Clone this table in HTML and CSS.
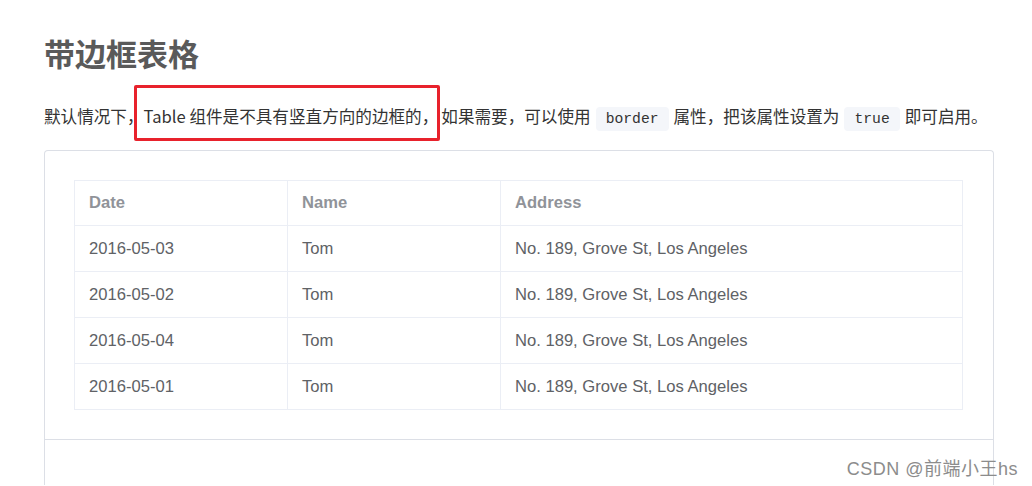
FILE: index.html
```html
<!DOCTYPE html>
<html lang="zh-CN">
<head>
<meta charset="utf-8">
<title>带边框表格</title>
<link rel="stylesheet" href="styles.css">
</head>
<body>
<main class="page">
  <h2 class="title">带边框表格</h2>
  <p class="desc">默认情况下，<span class="mark">Table 组件是不具有竖直方向的边框的，</span>如果需要，可以使用<code>border</code>属性，把该属性设置为<code>true</code>即可启用。</p>
  <section class="demo">
    <div class="demo-body">
      <table class="tbl">
        <colgroup><col class="c1"><col class="c2"><col class="c3"></colgroup>
        <thead>
          <tr><th>Date</th><th>Name</th><th>Address</th></tr>
        </thead>
        <tbody>
          <tr><td>2016-05-03</td><td>Tom</td><td>No. 189, Grove St, Los Angeles</td></tr>
          <tr><td>2016-05-02</td><td>Tom</td><td>No. 189, Grove St, Los Angeles</td></tr>
          <tr><td>2016-05-04</td><td>Tom</td><td>No. 189, Grove St, Los Angeles</td></tr>
          <tr><td>2016-05-01</td><td>Tom</td><td>No. 189, Grove St, Los Angeles</td></tr>
        </tbody>
      </table>
    </div>
    <div class="demo-foot"></div>
  </section>
</main>
<div class="watermark">CSDN @前端小王hs</div>
</body>
</html>
```
FILE: styles.css
```css
html, body {
  margin: 0;
  padding: 0;
  background: #ffffff;
  overflow: hidden;
}
body {
  font-family: "Noto Sans CJK SC", "Liberation Sans", sans-serif;
  height: 486px;
}
.page {
  padding: 29px 0 0 44px;
  width: 950px;
}
.title {
  margin: 0;
  font-size: 31px;
  line-height: 48px;
  font-weight: 700;
  color: #5a5a5a;
}
.desc {
  margin: 27px 0 0 0;
  font-size: 16.6px;
  line-height: 24px;
  color: #333333;
  white-space: nowrap;
}
.mark {
  position: relative;
  margin-right: 3px;
}
.mark::after {
  content: "";
  position: absolute;
  left: -10px;
  right: -2px;
  top: -19px;
  bottom: -13px;
  border: 3px solid #e8222c;
  border-radius: 2px;
}
.desc code {
  font-family: "Liberation Mono", "DejaVu Sans Mono", monospace;
  font-size: 14.7px;
  background: #f4f6fa;
  color: #333;
  border-radius: 4px;
  padding: 4px 10px;
  margin: 0 5px;
}
.demo {
  margin-top: 19px;
  border: 1px solid #dcdfe6;
  border-bottom: 0;
  border-radius: 4px 4px 0 0;
}
.demo-body {
  padding: 29px;
}
.tbl {
  width: 889px;
  border-collapse: collapse;
  table-layout: fixed;
  font-family: "Liberation Sans", Arial, sans-serif;
  font-size: 16.6px;
}
.c1, .c2 { width: 213px; }
.tbl th, .tbl td {
  border: 1px solid #ebeef5;
  text-align: left;
  padding: 0 0 0 14px;
}
.tbl th {
  height: 44px;
  color: #909399;
  font-weight: 700;
}
.tbl td {
  height: 45px;
  color: #606266;
}
.demo-foot {
  border-top: 1px solid #dcdfe6;
  height: 45px;
}
.watermark {
  position: absolute;
  right: 14px;
  top: 454px;
  font-family: "Liberation Sans", "Noto Sans CJK SC", sans-serif;
  font-size: 18px;
  color: #8c8c8c;
  letter-spacing: 0.5px;
}
```
